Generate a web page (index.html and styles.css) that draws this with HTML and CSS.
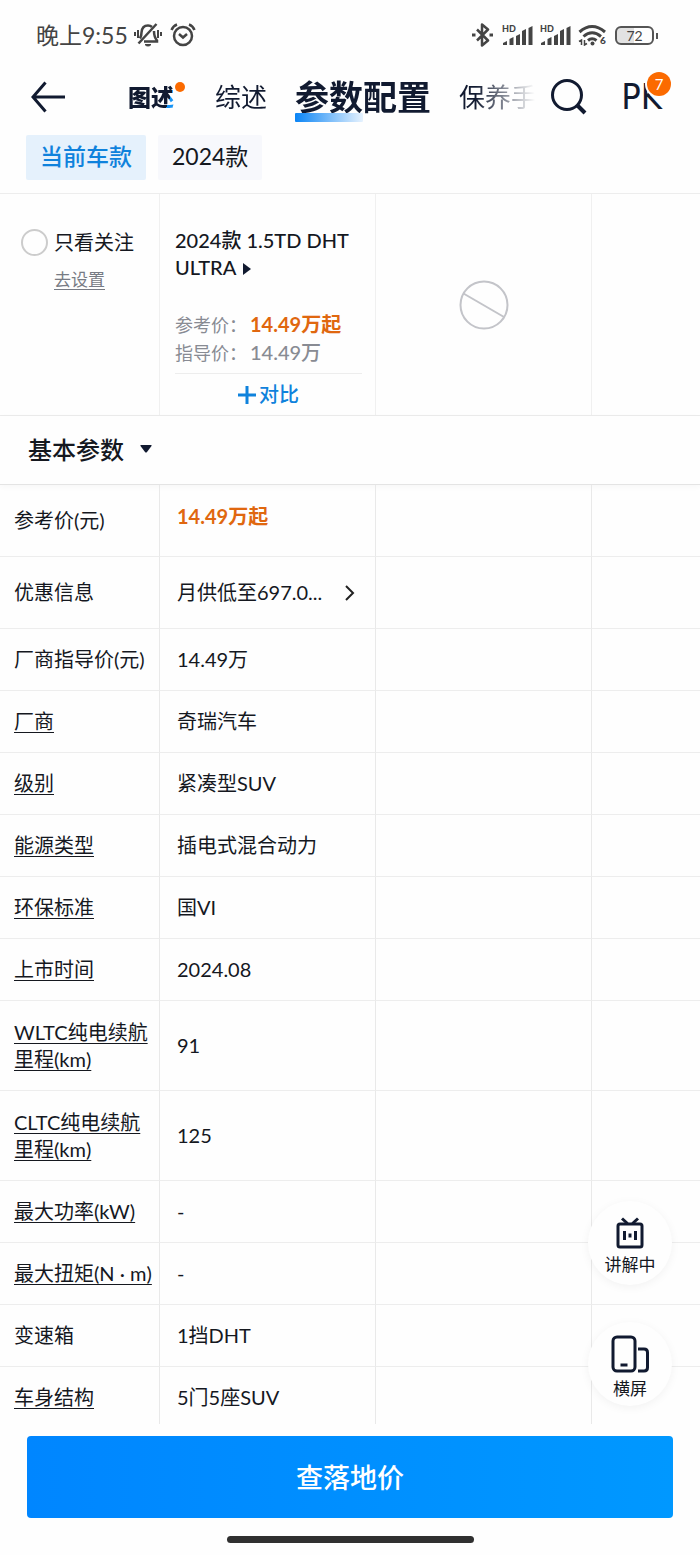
FILE: index.html
```html
<!DOCTYPE html>
<html lang="zh-CN">
<head>
    <meta charset="UTF-8">
    <meta name="viewport" content="width=device-width, initial-scale=1.0">
    <title>参数配置</title>
    <link rel="stylesheet" href="styles.css">
</head>
<body>
    <div class="status-bar">
        <span class="status-time">晚上9:55</span>
        <svg class="icon-bell" width="28" height="24" viewBox="0 0 28 24" fill="none" stroke="#444" stroke-width="2">
            <path d="M6 15.500Q7.500 13 7.500 9.500 8 2.500 14 2.500q2.500 0 4 1.500M20 8q0 6 3 9.500v1H10" stroke-width="2.500" />
            <path d="M22.500 1L4.500 20.500" stroke-width="2.500" />
            <path d="M11 21.500h6q-1 1.500-3 1.500t-3-1.500z" fill="#444" stroke-width="1" />
            <path d="M1 9v4M4 7v8M24 7v8M27 9v4" />
        </svg>
        <svg class="icon-alarm" width="26" height="24" viewBox="0 0 26 24" fill="none" stroke="#444" stroke-width="2">
            <circle cx="13" cy="13" r="9" stroke-width="2.500" />
            <path d="M9 11l4 3.500 4-3.500M1.500 7Q3 3 7 1.500M24.500 7Q23 3 19 1.500" stroke-width="2.500" />
        </svg>
        <div class="status-right">
            <svg width="24" height="24" viewBox="0 0 24 24" fill="none" stroke="#444" stroke-width="2.500" stroke-linejoin="round">
                <path d="M6 6.500l11 11-6 5v-21l6 5-11 11" />
                <path d="M1 12h3.500M18.500 12H22" stroke-width="3" />
            </svg>
            <svg width="31" height="22" viewBox="0 0 31 22" fill="#444">
                <text x="0" y="8" class="hd-text">HD</text>
                <path d="M1 21v-2l4-2v4zM7.500 21v-6l4-2v8zM14 21v-9l4-2v11zM20 21V7l4-2v16zM26.500 21V4l4-2v19z" />
            </svg>
            <svg width="31" height="22" viewBox="0 0 31 22" fill="#444">
                <text x="0" y="8" class="hd-text">HD</text>
                <path d="M1 21v-2l4-2v4zM7.500 21v-6l4-2v8zM14 21v-9l4-2v11zM20 21V7l4-2v16zM26.500 21V4l4-2v19z" />
            </svg>
            <svg width="30" height="22" viewBox="0 0 30 22" fill="none" stroke="#444" stroke-width="3">
                <path d="M1.500 8Q14 -3 27 8M5.500 12.500Q14 5 23 12.500M10 16.500Q14 13 18.500 16.500" />
                <circle cx="14.500" cy="19.500" r="2" fill="#444" stroke="none" />
                <path d="M1 17.500l2.500-1.500v5M6.500 16v5l2.500-1.500" stroke-width="1.500" />
                <text x="22" y="20" class="wifi-text">6</text>
            </svg>
            <div class="battery">72</div>
        </div>
    </div>

    <header class="nav">
        <a href="#" class="back" aria-label="返回">
            <svg width="36" height="32" viewBox="0 0 36 32" fill="none" stroke="#111a30" stroke-width="3">
                <path d="M35 16H3M15.500 1.500L3 16l12.500 14.500" />
            </svg>
        </a>
        <nav class="tabs">
            <a href="#" class="tab tab-logo"><span>图述</span></a>
            <a href="#" class="tab">综述</a>
            <a href="#" class="tab tab-active">参数配置</a>
            <a href="#" class="tab">保养手</a>
        </nav>
        <button class="icon-btn" aria-label="搜索">
            <svg width="36" height="36" viewBox="0 0 36 36" fill="none" stroke="#111a30" stroke-width="3">
                <circle cx="16" cy="16" r="14.500" />
                <path d="M26 26l8 8" stroke-width="4" />
            </svg>
        </button>
        <button class="icon-btn pk-btn">PK<span class="badge">7</span></button>
    </header>

    <div class="year-tags">
        <button class="tag tag-active">当前车款</button>
        <button class="tag">2024款</button>
    </div>

    <section class="compare">
        <div class="compare-cell filter">
            <label class="only-follow"><input type="checkbox">只看关注</label>
            <a href="#" class="set-link">去设置</a>
        </div>
        <div class="compare-cell car">
            <a href="#" class="car-name">2024款 1.5TD DHT ULTRA
                <svg width="8" height="12" viewBox="0 0 8 12" fill="#111a30"><path d="M0 0l8 6-8 6z" /></svg>
            </a>
            <p class="price-line">参考价：<strong class="price">14.49万起</strong></p>
            <p class="price-line">指导价：<strong>14.49万</strong></p>
            <button class="add-compare">
                <svg width="18" height="18" viewBox="0 0 18 18" stroke="#0f82dc" stroke-width="3"><path d="M9 0v18M0 9h18" /></svg>对比
            </button>
        </div>
        <div class="compare-cell empty">
            <svg width="50" height="50" viewBox="0 0 50 50" fill="none" stroke="#c3c4c9" stroke-width="2">
                <circle cx="25" cy="25" r="23.500" />
                <path d="M4.500 13.500L45 37" />
            </svg>
        </div>
        <div class="compare-cell"></div>
    </section>

    <button class="section-title">基本参数
        <svg width="12" height="8" viewBox="0 0 12 8" fill="#111a30"><path d="M1 0h10q1 0 .5 1L7 7q-1 1-2 0L.5 1Q0 0 1 0z" /></svg>
    </button>

    <main class="params">
        <table class="param-table">
            <colgroup>
                <col class="col-label"><col class="col-car"><col class="col-car"><col>
            </colgroup>
            <tbody>
                <tr class="row-promo"><th scope="row">参考价(元)</th><td><div class="price price-cell">14.49万起</div></td><td></td><td></td></tr>
                <tr class="row-promo"><th scope="row">优惠信息</th><td>
                    <a href="#" class="promo"><span>月供低至697.0...</span>
                        <svg width="10" height="16" viewBox="0 0 10 16" fill="none" stroke="#222" stroke-width="2"><path d="M1 1l7 7-7 7" /></svg>
                    </a>
                </td><td></td><td></td></tr>
                <tr><th scope="row">厂商指导价(元)</th><td>14.49万</td><td></td><td></td></tr>
                <tr><th scope="row"><a href="#">厂商</a></th><td>奇瑞汽车</td><td></td><td></td></tr>
                <tr><th scope="row"><a href="#">级别</a></th><td>紧凑型SUV</td><td></td><td></td></tr>
                <tr><th scope="row"><a href="#">能源类型</a></th><td>插电式混合动力</td><td></td><td></td></tr>
                <tr><th scope="row"><a href="#">环保标准</a></th><td>国VI</td><td></td><td></td></tr>
                <tr><th scope="row"><a href="#">上市时间</a></th><td>2024.08</td><td></td><td></td></tr>
                <tr class="row-double"><th scope="row"><a href="#">WLTC纯电续航里程(km)</a></th><td>91</td><td></td><td></td></tr>
                <tr class="row-double"><th scope="row"><a href="#">CLTC纯电续航里程(km)</a></th><td>125</td><td></td><td></td></tr>
                <tr><th scope="row"><a href="#">最大功率(kW)</a></th><td>-</td><td></td><td></td></tr>
                <tr><th scope="row"><a href="#">最大扭矩(N · m)</a></th><td>-</td><td></td><td></td></tr>
                <tr><th scope="row">变速箱</th><td>1挡DHT</td><td></td><td></td></tr>
                <tr><th scope="row"><a href="#">车身结构</a></th><td>5门5座SUV</td><td></td><td></td></tr>
            </tbody>
        </table>
        <div class="float-tools">
            <button class="float-btn">
                <svg width="28" height="32" viewBox="0 0 28 32" fill="none" stroke="#111a30" stroke-width="3">
                    <rect x="2" y="7" width="24" height="23" rx="2" />
                    <path d="M6 1.500l5.500 5M22 1.500l-5.500 5" />
                    <path d="M8.500 14v9M19.500 14v9M14 16.500v4" />
                </svg>
                讲解中
            </button>
            <button class="float-btn">
                <svg width="38" height="38" viewBox="0 0 38 38" fill="none" stroke="#111a30" stroke-width="3">
                    <rect x="2" y="2" width="22" height="34" rx="4" />
                    <path d="M9.500 30h7M27 14h6q3.500 0 3.500 3.500v15q0 3.500-3.500 3.500h-6" />
                </svg>
                横屏
            </button>
        </div>
    </main>

    <footer class="bottom-bar">
        <button class="price-btn">查落地价</button>
        <div class="home-line"></div>
    </footer>
</body>
</html>
```
FILE: styles.css
```css
* {
    box-sizing: border-box;
}

body {
    margin: 0;
    height: 100vh;
    display: flex;
    flex-direction: column;
    background: #fefefe;
    color: #15181f;
    font-family: Lato, "Noto Sans CJK SC", sans-serif;
    font-size: 20px;
    line-height: 27px;
}

a {
    color: inherit;
    text-decoration: none;
}

button {
    font: inherit;
    color: inherit;
    border: 0;
    padding: 0;
    background: none;
    cursor: pointer;
}

svg {
    flex: none;
}

p {
    margin: 0;
}

/* Status bar */
.status-bar {
    display: flex;
    align-items: center;
    height: 70px;
    padding: 0 46px 0 36px;
    color: #444;
}

.status-time {
    font-size: 23px;
}

.icon-bell {
    margin-left: 6px;
}

.icon-alarm {
    margin-left: 8px;
}

.status-right {
    display: flex;
    align-items: center;
    gap: 7px;
    margin-left: auto;
}

.hd-text {
    font: 900 9px Lato, sans-serif;
}

.wifi-text {
    font: 900 10px Lato, sans-serif;
    fill: #444;
    stroke: none;
}

.battery {
    position: relative;
    width: 39px;
    height: 19px;
    border: 2px solid #555;
    border-radius: 6px;
    background: linear-gradient(90deg, #e2e2e2 50%, #fefefe 50%);
    font-size: 14px;
    line-height: 15px;
    text-align: center;
}

.battery::after {
    content: "";
    position: absolute;
    right: -6px;
    top: 5px;
    width: 2px;
    height: 6px;
    background: #555;
}

/* Navigation */
.nav {
    display: flex;
    align-items: center;
    height: 54px;
    padding: 0 38px 0 30px;
    color: #111a30;
}

.back {
    display: flex;
}

.tabs {
    flex: 1;
    display: flex;
    align-items: center;
    gap: 28px;
    height: 54px;
    margin-left: 62px;
    min-width: 0;
    overflow: hidden;
    white-space: nowrap;
    -webkit-mask-image: linear-gradient(90deg, #000 calc(100% - 60px), transparent);
    mask-image: linear-gradient(90deg, #000 calc(100% - 60px), transparent);
}

.tab {
    position: relative;
    flex: none;
    font-size: 26px;
    line-height: 54px;
}

.tab-logo {
    padding-right: 13px;
    font-size: 23px;
    font-weight: 900;
}

.tab-logo span {
    background: linear-gradient(110deg, #111a30 84%, #1593f5 84%);
    -webkit-background-clip: text;
    background-clip: text;
    color: transparent;
}

.tab-logo::after {
    content: "";
    position: absolute;
    right: 2px;
    top: 12px;
    width: 10px;
    height: 10px;
    border-radius: 50%;
    background: #fb6a00;
}

.tab-active {
    font-size: 34px;
    font-weight: 700;
}

.tab-active::after {
    content: "";
    position: absolute;
    left: 0;
    bottom: 2px;
    width: 68px;
    height: 9px;
    border-radius: 1px;
    background: linear-gradient(90deg, #0a84f5, #e6f2fe);
}

.icon-btn {
    position: relative;
    display: flex;
    margin-left: 16px;
}

.pk-btn {
    margin-left: 34px;
    font: 36px "DejaVu Sans Condensed", "Noto Sans", sans-serif;
    line-height: 54px;
}

.badge {
    position: absolute;
    right: -9px;
    top: 2px;
    width: 24px;
    height: 24px;
    border-radius: 50%;
    background: #fb6a00;
    box-shadow: 0 0 0 2px #fefefe;
    color: #fff;
    font: 15px Lato, sans-serif;
    line-height: 24px;
    text-align: center;
}

/* Model year tags */
.year-tags {
    display: flex;
    gap: 12px;
    padding: 11px 26px 13px;
    border-bottom: 1px solid #ededed;
}

.tag {
    height: 45px;
    padding: 0 14px 2px;
    border-radius: 2px;
    background: #f7f8fc;
    font-size: 23px;
}

.tag-active {
    background: #e5f1fc;
    color: #0f82dc;
    font-weight: 500;
}

/* Cars being compared */
.compare {
    display: grid;
    grid-template-columns: 160px 216px 216px 1fr;
    height: 222px;
    border-bottom: 1px solid #ebebeb;
}

.compare-cell {
    border-right: 1px solid #f0f0f0;
}

.compare-cell:last-child {
    border-right: 0;
}

.filter {
    padding: 35px 0 0 21px;
}

.only-follow {
    display: flex;
    align-items: center;
    gap: 6px;
}

.only-follow input {
    appearance: none;
    width: 27px;
    height: 27px;
    margin: 0;
    border: 2px solid #ccc;
    border-radius: 50%;
}

.only-follow input:checked {
    background: #0f82dc;
}

.set-link {
    display: block;
    padding: 10px 0 0 33px;
    color: #777b84;
    font-size: 17px;
    text-decoration: underline;
    text-underline-offset: 3px;
}

.car {
    display: flex;
    flex-direction: column;
    padding: 33px 13px 0 15px;
}

.car-name {
    height: 84px;
    font-weight: 500;
}

.car-name svg {
    margin-left: 2px;
}

.price-line {
    color: #888b93;
    font-size: 18px;
    white-space: nowrap;
}

.price-line strong {
    margin-left: 3px;
    font-size: 20px;
    font-weight: 500;
}

.price,
.price-line .price {
    color: #e0670f;
    font-weight: 700;
}

.add-compare {
    display: flex;
    align-items: center;
    justify-content: center;
    gap: 3px;
    height: 42px;
    margin-top: 6px;
    border-top: 1px solid #ededed;
    color: #0f82dc;
    font-weight: 500;
}

.empty {
    display: flex;
    align-items: center;
    justify-content: center;
}

/* Section title */
.section-title {
    display: flex;
    align-items: center;
    gap: 16px;
    flex: none;
    height: 69px;
    padding: 0 0 2px 28px;
    border-bottom: 1px solid #e4e4e4;
    box-shadow: 0 2px 6px rgba(0, 0, 0, 0.03);
    font-size: 24px;
    font-weight: 500;
}

/* Parameter table */
.params {
    position: relative;
    flex: 1;
    min-height: 0;
    overflow: hidden;
}

.param-table {
    width: 100%;
    table-layout: fixed;
    border-collapse: separate;
    border-spacing: 0;
}

.col-label {
    width: 160px;
}

.col-car {
    width: 216px;
}

.param-table th,
.param-table td {
    height: 62px;
    padding: 0 12px 0 17px;
    border-right: 1px solid #e9e9e9;
    border-bottom: 1px solid #ededed;
    font-weight: 400;
    text-align: left;
}

.param-table th {
    padding: 0 0 0 14px;
}

.param-table td:last-child {
    border-right: 0;
}

.param-table th a {
    text-decoration: underline;
    text-decoration-thickness: 1px;
    text-underline-offset: 3px;
}

.param-table .row-promo > * {
    height: 72px;
}

.param-table .row-double > * {
    height: 90px;
}

.price-cell {
    padding-bottom: 8px;
}

.promo {
    display: flex;
    align-items: center;
    justify-content: space-between;
    padding-right: 8px;
}

/* Floating buttons */
.float-tools {
    position: absolute;
    right: 28px;
    bottom: 18px;
    display: flex;
    flex-direction: column;
    gap: 37px;
}

.float-btn {
    display: flex;
    flex-direction: column;
    align-items: center;
    justify-content: center;
    gap: 2px;
    width: 84px;
    height: 84px;
    padding-top: 8px;
    border-radius: 50%;
    background: #fefefe;
    box-shadow: 0 2px 10px rgba(0, 0, 0, 0.05);
    font-size: 17px;
}

/* Bottom bar */
.bottom-bar {
    flex: none;
    padding: 12px 27px;
}

.price-btn {
    display: block;
    width: 100%;
    height: 82px;
    border-radius: 4px;
    background: linear-gradient(90deg, #0086ff, #0098ff);
    color: #fff;
    font-size: 27px;
    font-weight: 500;
}

.home-line {
    width: 247px;
    height: 7px;
    margin: 18px auto 0;
    border-radius: 4px;
    background: #303030;
}
```
